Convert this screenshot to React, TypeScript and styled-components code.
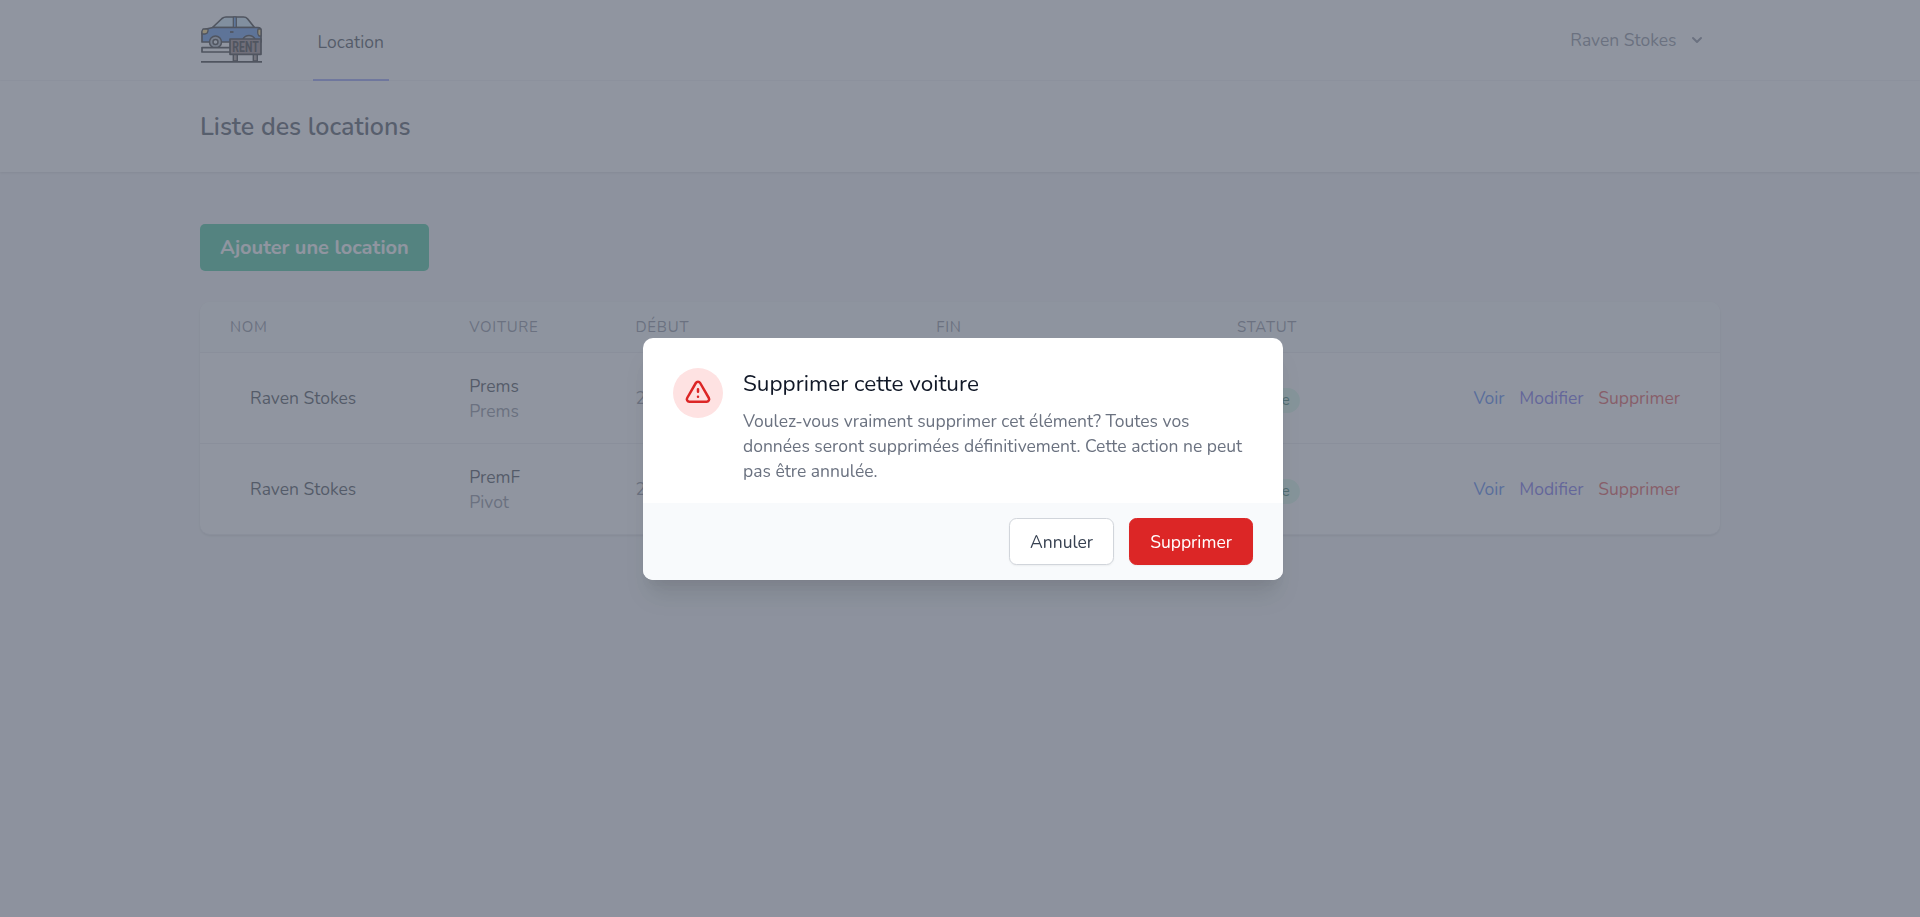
import React from 'react';
import styled, { createGlobalStyle } from 'styled-components';

const GlobalStyle = createGlobalStyle`
  html { font-size: 20px; }
  *, *::before, *::after { box-sizing: border-box; }
  body {
    margin: 0;
    overflow: hidden;
    font-family: Nunito, Lato, "Open Sans", sans-serif;
    line-height: 1.5;
    color: #111827;
  }
  h2, h3, p { margin: 0; }
  a { text-decoration: none; color: inherit; }
  button { font: inherit; cursor: pointer; margin: 0; }
`;

const Page = styled.div`
  min-height: 100vh;
  background: #f3f4f6;
`;

const Container = styled.div`
  max-width: 80rem;
  margin: 0 auto;
  padding: 0 2rem;
`;

const NavBar = styled.nav`
  background: #fff;
  border-bottom: 1px solid #f3f4f6;
`;

const NavContent = styled(Container)`
  display: flex;
  justify-content: space-between;
  height: 81px;
  margin-bottom: -1px;
`;

const NavLeft = styled.div`
  display: flex;
  gap: 49.6px;
`;

const Brand = styled.a`
  display: flex;
  align-items: center;
  height: 78px;
  svg { display: block; }
`;

const NavLink = styled.a`
  display: flex;
  align-items: center;
  padding: 5px 5px 0;
  font-size: 0.875rem;
  line-height: 1.25rem;
  border-bottom: 2px solid #818cf8;
`;

const UserMenu = styled.button`
  display: flex;
  align-items: center;
  height: 80px;
  padding: 0 13px 0 0;
  border: 0;
  background: none;
  gap: 10.5px;
  color: #6b7280;
  font-size: 0.875rem;
  line-height: 1.25rem;
`;

const PageHeader = styled.header`
  position: relative;
  background: #fff;
  padding: 31px 0 29px;
  box-shadow: 0 1px 3px rgba(0, 0, 0, 0.1), 0 1px 2px rgba(0, 0, 0, 0.06);
`;

const PageTitle = styled.h2`
  font-size: 1.25rem;
  line-height: 1.25;
  font-weight: 600;
  color: #1f2937;
`;

const Main = styled(Container).attrs({ as: 'main' })`
  padding-top: 51.75px;
`;

const AddButton = styled.a`
  display: block;
  width: fit-content;
  padding: 10px 20px;
  border-radius: 5px;
  background: #10b981;
  color: #fff;
  font-weight: 700;
  line-height: 27px;
`;

const Table = styled.div`
  margin-top: 31px;
  overflow: hidden;
  border-radius: 10px;
  background: #fff;
  border-bottom: 1px solid #e5e7eb;
  box-shadow: 0 1px 3px rgba(0, 0, 0, 0.1), 0 1px 2px rgba(0, 0, 0, 0.06);
`;

const TableRow = styled.div`
  display: grid;
  grid-template-columns: 239.2px 166.3px 300.7px 300.8px 1fr;
  align-items: center;
  height: 91px;
  font-size: 0.875rem;
  line-height: 1.25rem;
  & + & { border-top: 1px solid #e5e7eb; }
`;

const TableHead = styled(TableRow)`
  height: 51px;
  background: #f8fafc;
  border-bottom: 1px solid #e5e7eb;
  color: #6b7280;
  font-size: 0.75rem;
  line-height: 1rem;
  letter-spacing: 0.05em;
  text-transform: uppercase;
  & + ${TableRow} { border-top: 0; height: 90px; }
`;

const Cell = styled.div<{ $muted?: boolean; $indent?: boolean }>`
  padding-left: ${(p) => (p.$indent ? '50px' : '30px')};
  color: ${(p) => (p.$muted ? '#6b7280' : 'inherit')};
`;

const CarCell = styled(Cell)`
  padding-top: 1px;
`;

const CarModel = styled.div`
  color: #6b7280;
`;

const StatusCell = styled.div`
  display: flex;
  align-items: center;
  justify-content: space-between;
  padding: 0 40px 0 30px;
`;

const Badge = styled.span`
  margin-top: 4px;
  padding: 0 10px 0 10.5px;
  border-radius: 999px;
  background: #d1fae5;
  color: #065f46;
  font-size: 0.75rem;
  line-height: 25px;
`;

const Actions = styled.div`
  display: flex;
  gap: 14.6px;
`;

const ActionLink = styled.a<{ $color: string }>`
  color: ${(p) => p.$color};
`;

const Overlay = styled.div`
  position: fixed;
  inset: 0;
  display: flex;
  align-items: center;
  justify-content: center;
  padding: 1px 0 0 6px;
  background: rgba(107, 114, 128, 0.75);
`;

const Modal = styled.div`
  width: 32rem;
  overflow: hidden;
  border-radius: 10px;
  background: #fff;
  box-shadow: 0 20px 25px -5px rgba(0, 0, 0, 0.1), 0 10px 10px -5px rgba(0, 0, 0, 0.04);
`;

const ModalBody = styled.div`
  display: flex;
  gap: 20px;
  padding: 30px 30px 19px;
`;

const ModalCopy = styled.div`
  padding-top: 1px;
`;

const WarningCircle = styled.div`
  display: flex;
  flex: none;
  align-items: center;
  justify-content: center;
  width: 50px;
  height: 50px;
  border-radius: 50%;
  background: #fee2e2;
  color: #dc2626;
`;

const ModalTitle = styled.h3`
  font-size: 1.125rem;
  line-height: 30px;
  font-weight: 400;
`;

const ModalText = styled.p`
  margin-top: 10px;
  color: #6b7280;
  font-size: 0.875rem;
  line-height: 1.25rem;
`;

const ModalFooter = styled.div`
  display: flex;
  justify-content: flex-end;
  gap: 15px;
  padding: 15px 30px;
  background: #f8fafc;
`;

const ModalButton = styled.button<{ $danger?: boolean }>`
  padding: 11px 20px 9px;
  border: 1px solid ${(p) => (p.$danger ? '#dc2626' : '#d1d5db')};
  border-radius: 7.5px;
  background: ${(p) => (p.$danger ? '#dc2626' : '#fff')};
  color: ${(p) => (p.$danger ? '#fff' : '#374151')};
  font-size: 0.875rem;
  line-height: 25px;
  box-shadow: 0 1px 2px rgba(0, 0, 0, 0.05);
`;

const RentLogo = () => (
  <svg width="63" height="50" viewBox="0 0 63 50" fill="none" stroke="#000" strokeWidth="1.7" strokeLinejoin="round">
    <path d="M12.5 13.5 22 4.500Q23.800 3 26 3H43.500Q46 3 47.500 4.800L54.500 13.500Z" fill="#c4e8fa" />
    <path d="M33.300 3h3v12h-3z" fill="#3b86e8" strokeWidth="1.2" />
    <path d="M13 13.500H58Q61 13.500 61 17V28H2V19Q2 16 6 15Z" fill="#3b7ee0" />
    <path d="M3 15H8V17Q7.500 20 5 20H2V17Z" fill="#ffd15c" strokeWidth="1.3" />
    <path d="M61 15H58Q57 20 59 22H61Z" fill="#ffd15c" strokeWidth="1.3" />
    <path d="M30 18h3.500" />
    <circle cx="15.5" cy="28" r="6" fill="#9ba6b2" strokeWidth="1.5" />
    <circle cx="15.5" cy="28" r="2.5" fill="#e3e9ee" strokeWidth="1.4" />
    <path d="M43 25Q45 21.500 49 21.500T55 25" fill="#9ba6b2" />
    <path d="M30 33.600H2V38H30" fill="#fff" />
    <path d="M33.300 40h4v7h-4zM53.300 40h4v7h-4z" fill="#8e7b76" strokeWidth="1.4" />
    <path d="M30 25H61V40.300H30Z" fill="#806a68" />
    <path d="M1 47.800H62" />
    <text x="32.3" y="38" fill="#000" stroke="none" fontFamily="Roboto, sans-serif" fontWeight="800" fontSize="14.5" textLength="26.4" lengthAdjust="spacingAndGlyphs">RENT</text>
  </svg>
);

const ChevronDown = () => (
  <svg width="20" height="20" viewBox="0 0 20 20" fill="currentColor">
    <path
      fillRule="evenodd"
      clipRule="evenodd"
      d="M5.293 7.293a1 1 0 011.414 0L10 10.586l3.293-3.293a1 1 0 111.414 1.414l-4 4a1 1 0 01-1.414 0l-4-4a1 1 0 010-1.414z"
    />
  </svg>
);

const WarningIcon = () => (
  <svg width="30" height="30" viewBox="0 0 24 24" fill="none" stroke="currentColor" strokeWidth="2" strokeLinecap="round" strokeLinejoin="round">
    <path d="M12 9v2m0 4h.01m-6.938 4h13.856c1.54 0 2.502-1.667 1.732-3L13.732 4c-.77-1.333-2.694-1.333-3.464 0L3.34 16c-.77 1.333.192 3 1.732 3z" />
  </svg>
);

const rentals = [
  { id: 1, name: 'Raven Stokes', brand: 'Prems', model: 'Prems', start: '2021-05-10', end: '2021-05-14' },
  { id: 2, name: 'Raven Stokes', brand: 'PremF', model: 'Pivot', start: '2021-05-17', end: '2021-05-21' },
];

export default function App() {
  return (
    <>
      <GlobalStyle />
      <Page>
        <NavBar>
          <NavContent>
            <NavLeft>
              <Brand href="#"><RentLogo /></Brand>
              <NavLink href="#">Location</NavLink>
            </NavLeft>
            <UserMenu>
              Raven Stokes
              <ChevronDown />
            </UserMenu>
          </NavContent>
        </NavBar>
        <PageHeader>
          <Container><PageTitle>Liste des locations</PageTitle></Container>
        </PageHeader>
        <Main>
          <AddButton href="#">Ajouter une location</AddButton>
          <Table>
            <TableHead>
              <Cell>Nom</Cell>
              <Cell>Voiture</Cell>
              <Cell>Début</Cell>
              <Cell>Fin</Cell>
              <Cell>Statut</Cell>
            </TableHead>
            {rentals.map((r) => (
              <TableRow key={r.id}>
                <Cell $indent>{r.name}</Cell>
                <CarCell>
                  {r.brand}
                  <CarModel>{r.model}</CarModel>
                </CarCell>
                <Cell $muted>{r.start}</Cell>
                <Cell $muted>{r.end}</Cell>
                <StatusCell>
                  <Badge>Active</Badge>
                  <Actions>
                    <ActionLink href="#" $color="#2563eb">Voir</ActionLink>
                    <ActionLink href="#" $color="#4f46e5">Modifier</ActionLink>
                    <ActionLink href="#" $color="#dc2626">Supprimer</ActionLink>
                  </Actions>
                </StatusCell>
              </TableRow>
            ))}
          </Table>
        </Main>
      </Page>
      <Overlay>
        <Modal role="dialog" aria-modal="true">
          <ModalBody>
            <WarningCircle><WarningIcon /></WarningCircle>
            <ModalCopy>
              <ModalTitle>Supprimer cette voiture</ModalTitle>
              <ModalText>
                Voulez-vous vraiment supprimer cet élément? Toutes vos données seront supprimées définitivement. Cette action ne peut pas être annulée.
              </ModalText>
            </ModalCopy>
          </ModalBody>
          <ModalFooter>
            <ModalButton>Annuler</ModalButton>
            <ModalButton $danger>Supprimer</ModalButton>
          </ModalFooter>
        </Modal>
      </Overlay>
    </>
  );
}
